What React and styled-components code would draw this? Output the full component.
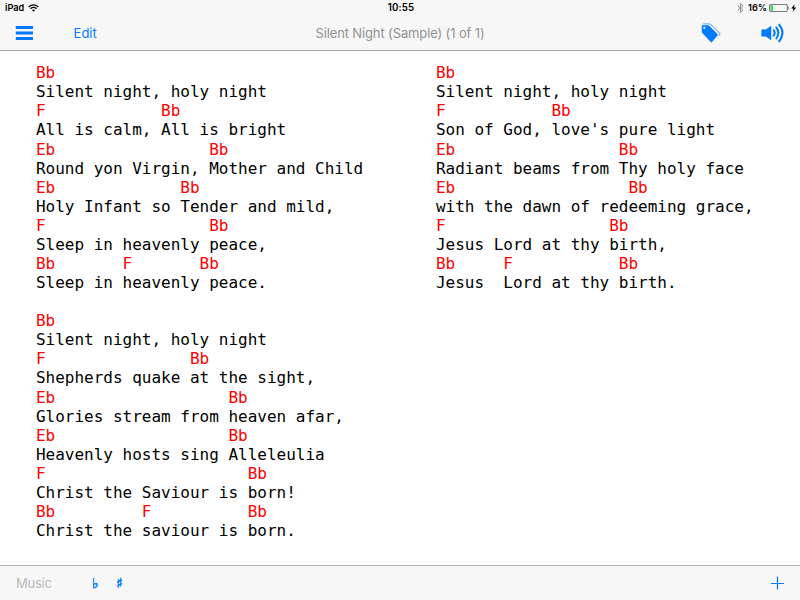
import React from 'react';
import styled, { createGlobalStyle } from 'styled-components';

const BLUE = '#007aff';

const GlobalStyle = createGlobalStyle`
  body {
    margin: 0;
    background: #ffffff;
  }
`;

const ScreenStyled = styled.div`
  display: flex;
  flex-direction: column;
  width: 800px;
  height: 600px;
  overflow: hidden;
  background: #ffffff;
  font-family: Inter, 'Liberation Sans', sans-serif;
`;

const HeaderStyled = styled.header`
  box-sizing: border-box;
  height: 51px;
  background: #f7f7f7;
  border-bottom: 1px solid #a9a9a9;
`;

const StatusBarStyled = styled.div`
  display: grid;
  grid-template-columns: 1fr auto 1fr;
  align-items: center;
  height: 16px;
  padding: 0 3px 0 5px;
  color: #000000;
  font-size: 9.2px;
  line-height: 16px;
`;

const StatusGroupStyled = styled.div`
  display: flex;
  align-items: center;
  justify-content: ${({ $end }) => ($end ? 'flex-end' : 'flex-start')};
  font-weight: 600;

  svg {
    display: block;
    flex: none;
  }
`;

const CarrierStyled = styled.span`
  margin-right: 4px;
`;

const ClockStyled = styled.time`
  font-size: 9.7px;
  font-weight: 600;
  letter-spacing: 0.1px;
`;

const PercentStyled = styled.span`
  margin: 0 2px 0 4px;
`;

const NavBarStyled = styled.nav`
  display: grid;
  grid-template-columns: 1fr auto 1fr;
  align-items: center;
  height: 34px;
  padding: 0 15px;
`;

const NavGroupStyled = styled.div`
  display: flex;
  align-items: center;
  justify-content: ${({ $end }) => ($end ? 'flex-end' : 'flex-start')};
  gap: ${({ $gap }) => $gap}px;
`;

const ButtonStyled = styled.button`
  display: block;
  padding: 0;
  border: 0;
  background: none;
  color: ${BLUE};
  font-family: inherit;
  font-size: 13px;
  line-height: 16px;
  cursor: pointer;

  svg {
    display: block;
  }
`;

const TitleStyled = styled.h1`
  margin: 0;
  color: #929292;
  font-size: 13px;
  font-weight: 400;
  line-height: 16px;
  letter-spacing: -0.13px;
`;

const SongStyled = styled.main`
  display: grid;
  grid-template-columns: 400px 400px;
  flex: 1;
  align-items: start;
  padding-top: 12.2px;
`;

const ColumnStyled = styled.div`
  display: flex;
  flex-direction: column;
  gap: 19.08px;
  padding-left: 36px;
`;

const LineStyled = styled.div`
  height: 19.08px;
  color: ${({ $chord }) => ($chord ? '#ff0000' : '#000000')};
  font-family: 'DejaVu Sans Mono', monospace;
  font-size: 16px;
  line-height: 19.08px;
  letter-spacing: -0.01px;
  white-space: pre;
`;

const ToolbarStyled = styled.footer`
  box-sizing: border-box;
  display: flex;
  align-items: center;
  height: 35px;
  padding: 0 16px;
  background: #f7f7f7;
  border-top: 1px solid #b2b2b2;
`;

const MusicStyled = styled.span`
  width: 76px;
  color: #bababa;
  font-size: 13px;
  line-height: 16px;
  letter-spacing: -0.25px;
`;

const AccidentalStyled = styled(ButtonStyled)`
  width: 24px;
  font-family: 'DejaVu Sans', sans-serif;
  font-size: 14px;
  text-align: left;
  -webkit-text-stroke: 0.5px ${BLUE};
`;

const AddStyled = styled(ButtonStyled)`
  margin-left: auto;
`;

const WifiIcon = () => (
  <svg width="11" height="8" viewBox="0 0 11 8" fill="none" stroke="#000000">
    <path d="M0.7 2.9Q5.5 -1.1 10.3 2.9" strokeWidth="1.3" />
    <path d="M2.5 4.7Q5.5 2.2 8.5 4.7" strokeWidth="1.2" />
    <path d="M3.9 6.1Q5.5 4.7 7.1 6.1L5.5 7.7Z" fill="#000000" stroke="none" />
  </svg>
);

const BluetoothIcon = () => (
  <svg width="7" height="10" viewBox="0 0 7 10" fill="none" stroke="#858585" strokeWidth="0.9">
    <path d="M0.6 2.5L6 7.3L3.4 9.4V0.6L6 2.7L0.6 7.5" />
  </svg>
);

const BatteryIcon = () => (
  <svg width="21" height="8" viewBox="0 0 21 8">
    <rect x="0.4" y="0.4" width="18" height="7.2" rx="1.5" fill="none" stroke="#333333" strokeWidth="0.7" />
    <rect x="1.4" y="1.3" width="2.7" height="5.4" rx="0.5" fill="#35d94c" />
    <path d="M19 2.5Q20.6 4 19 5.5Z" fill="#333333" />
  </svg>
);

const BoltIcon = () => (
  <svg width="7" height="8" viewBox="0 0 7 8">
    <path d="M4.6 0.2L1.3 4.4H3.4L2.6 7.8L6.3 3.4H4Z" fill="#000000" />
  </svg>
);

const MenuIcon = () => (
  <svg width="18" height="14" viewBox="0 0 18 14" fill={BLUE}>
    <rect x="0.8" y="0" width="17.2" height="3" />
    <rect x="0.8" y="5.5" width="17.2" height="3" />
    <rect x="0.8" y="11" width="17.2" height="3" />
  </svg>
);

const TagsIcon = () => (
  <svg width="20" height="20" viewBox="0 0 20 20">
    <path
      fill={BLUE}
      fillRule="evenodd"
      d="M0.7 3.2Q0.7 2.3 1.6 2.3L7 2.2Q7.7 2.2 8.2 2.7L16.4 11.1Q17 11.8 16.4 12.4L11.1 19Q10.4 19.6 9.7 19L1.3 9.9Q0.8 9.3 0.8 8.6ZM3.3 3.8A1.1 1.1 0 1 0 3.3 6A1.1 1.1 0 1 0 3.3 3.8Z"
    />
    <path
      d="M2.3 0.9H8.6Q9.2 0.9 9.7 1.4L18.6 10.1Q19.2 10.8 18.6 11.5L17.6 12.8"
      fill="none"
      stroke={BLUE}
      strokeOpacity="0.5"
      strokeWidth="1.2"
    />
  </svg>
);

const SpeakerIcon = () => (
  <svg width="25" height="20" viewBox="0 0 25 20" fill="none" stroke={BLUE} strokeWidth="2">
    <path d="M1.4 6.6H5.8L11.2 2.8V17.2L5.8 13.4H1.4Z" fill={BLUE} stroke="none" />
    <path d="M13.2 6.6Q16.2 10 13.2 13.4" />
    <path d="M15.9 3.9Q20.7 10 15.9 16.1" />
    <path d="M18.7 1.2Q26.2 10 18.7 18.8" />
  </svg>
);

const PlusIcon = () => (
  <svg width="14" height="14" viewBox="0 0 14 14" stroke={BLUE} strokeWidth="1.2">
    <path d="M7.5 0.5V13.5M1 7.5H14" />
  </svg>
);

// Chord lines are flagged so that they can be coloured; spacing is significant.
const c = text => ({ text, chord: true });
const l = text => ({ text, chord: false });

const COLUMNS = [
  [
    [
      c('Bb'),
      l('Silent night, holy night'),
      c('F            Bb'),
      l('All is calm, All is bright'),
      c('Eb                Bb'),
      l('Round yon Virgin, Mother and Child'),
      c('Eb             Bb'),
      l('Holy Infant so Tender and mild,'),
      c('F                 Bb'),
      l('Sleep in heavenly peace,'),
      c('Bb       F       Bb'),
      l('Sleep in heavenly peace.'),
    ],
    [
      c('Bb'),
      l('Silent night, holy night'),
      c('F               Bb'),
      l('Shepherds quake at the sight,'),
      c('Eb                  Bb'),
      l('Glories stream from heaven afar,'),
      c('Eb                  Bb'),
      l('Heavenly hosts sing Alleleulia'),
      c('F                     Bb'),
      l('Christ the Saviour is born!'),
      c('Bb         F          Bb'),
      l('Christ the saviour is born.'),
    ],
  ],
  [
    [
      c('Bb'),
      l('Silent night, holy night'),
      c('F           Bb'),
      l("Son of God, love's pure light"),
      c('Eb                 Bb'),
      l('Radiant beams from Thy holy face'),
      c('Eb                  Bb'),
      l('with the dawn of redeeming grace,'),
      c('F                 Bb'),
      l('Jesus Lord at thy birth,'),
      c('Bb     F           Bb'),
      l('Jesus  Lord at thy birth.'),
    ],
  ],
];

const App = () => (
  <ScreenStyled>
    <GlobalStyle />
    <HeaderStyled>
      <StatusBarStyled>
        <StatusGroupStyled>
          <CarrierStyled>iPad</CarrierStyled>
          <WifiIcon />
        </StatusGroupStyled>
        <ClockStyled>10:55</ClockStyled>
        <StatusGroupStyled $end>
          <BluetoothIcon />
          <PercentStyled>16%</PercentStyled>
          <BatteryIcon />
          <BoltIcon />
        </StatusGroupStyled>
      </StatusBarStyled>
      <NavBarStyled>
        <NavGroupStyled $gap={40.6}>
          <ButtonStyled aria-label="Menu">
            <MenuIcon />
          </ButtonStyled>
          <ButtonStyled>Edit</ButtonStyled>
        </NavGroupStyled>
        <TitleStyled>Silent Night (Sample) (1 of 1)</TitleStyled>
        <NavGroupStyled $end $gap={39}>
          <ButtonStyled aria-label="Tags">
            <TagsIcon />
          </ButtonStyled>
          <ButtonStyled aria-label="Sound">
            <SpeakerIcon />
          </ButtonStyled>
        </NavGroupStyled>
      </NavBarStyled>
    </HeaderStyled>
    <SongStyled>
      {COLUMNS.map((verses, column) => (
        <ColumnStyled key={column}>
          {verses.map((lines, verse) => (
            <div key={verse}>
              {lines.map(({ text, chord }, index) => (
                <LineStyled key={index} $chord={chord}>
                  {text}
                </LineStyled>
              ))}
            </div>
          ))}
        </ColumnStyled>
      ))}
    </SongStyled>
    <ToolbarStyled>
      <MusicStyled>Music</MusicStyled>
      <AccidentalStyled>♭</AccidentalStyled>
      <AccidentalStyled>♯</AccidentalStyled>
      <AddStyled aria-label="Add">
        <PlusIcon />
      </AddStyled>
    </ToolbarStyled>
  </ScreenStyled>
);

export default App;
